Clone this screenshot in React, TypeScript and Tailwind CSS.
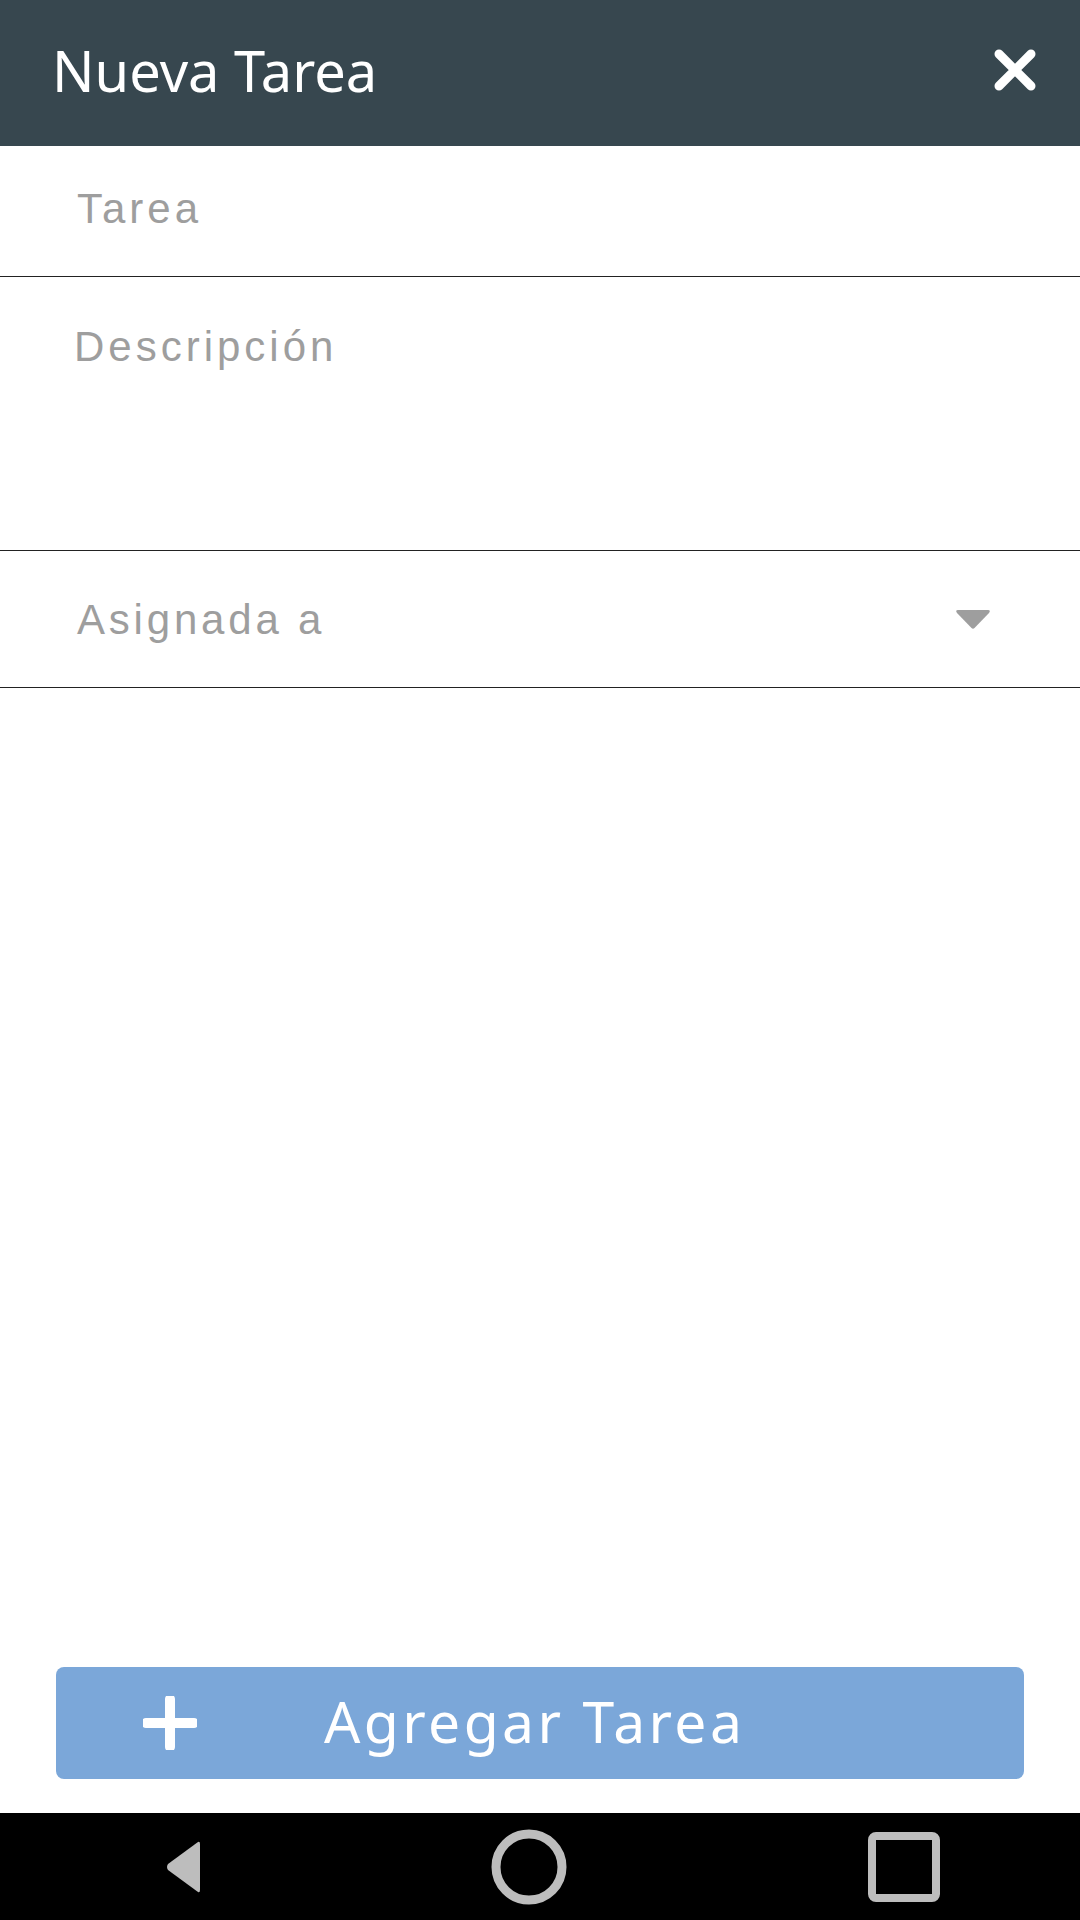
import { useState } from 'react';

export default function App() {
  const [tarea, setTarea] = useState('');
  const [descripcion, setDescripcion] = useState('');

  return (
    <div className="h-[1920px] w-[1080px] flex flex-col bg-white" style={{ fontFamily: '"Open Sans", sans-serif' }}>
      <header className="h-[146px] shrink-0 bg-[#37474f] flex items-center justify-between pl-[52px] pr-[43px]">
        <h1 className="text-white text-[56px] leading-none -mt-[6px]" style={{ fontFamily: '"Noto Sans", sans-serif' }}>
          Nueva Tarea
        </h1>
        <button aria-label="Cerrar" className="w-[44px] h-[44px] flex items-center justify-center -mt-[6px]">
          <svg width="44" height="44" viewBox="0 0 44 44">
            <path d="M6 6 L38 38 M38 6 L6 38" stroke="white" strokeWidth="9" strokeLinecap="round" />
          </svg>
        </button>
      </header>

      <div className="h-[131px] shrink-0 border-b border-[#222] flex items-center px-[77px]">
        <input
          value={tarea}
          onChange={(e) => setTarea(e.target.value)}
          placeholder="Tarea"
          className="w-full bg-transparent outline-none text-[42px] tracking-[4px] text-[#616161] placeholder:text-[#9e9e9e] -mt-[6px]"
          style={{ fontFamily: '"Liberation Sans", sans-serif' }}
        />
      </div>

      <div className="h-[274px] shrink-0 border-b border-[#222] px-[74px] pt-[45px]">
        <textarea
          value={descripcion}
          onChange={(e) => setDescripcion(e.target.value)}
          placeholder="Descripción"
          className="w-full h-[180px] resize-none bg-transparent outline-none text-[42px] leading-[1.2] tracking-[4px] text-[#616161] placeholder:text-[#9e9e9e]"
          style={{ fontFamily: '"Liberation Sans", sans-serif' }}
        />
      </div>

      <div className="h-[137px] shrink-0 border-b border-[#222] flex items-center justify-between pl-[77px] pr-[89px]">
        <span className="text-[42px] tracking-[3.8px] text-[#9e9e9e]" style={{ fontFamily: '"Liberation Sans", sans-serif' }}>
          Asignada a
        </span>
        <svg width="36" height="22" viewBox="0 0 36 22" className="mt-[2px]">
          <path d="M3 1 H33 Q36 1 34 4 L19.5 19 Q18 20.5 16.5 19 L2 4 Q0 1 3 1 Z" fill="#9e9e9e" />
        </svg>
      </div>

      <div className="flex-1" />

      <div className="px-[56px] pb-[34px] shrink-0">
        <button className="w-full h-[112px] rounded-[8px] bg-[#7ba7d9] flex items-center relative">
          <svg width="54" height="54" viewBox="0 0 54 54" className="absolute left-[87px] top-[29px]">
            <path d="M27 3 V51 M3 27 H51" stroke="white" strokeWidth="10" strokeLinecap="round" />
          </svg>
          <span className="ml-[268px] text-white text-[57px] tracking-[3.4px] leading-none -mt-[4px]" style={{ fontFamily: '"Noto Sans", sans-serif' }}>
            Agregar Tarea
          </span>
        </button>
      </div>

      <nav className="h-[107px] shrink-0 bg-black flex items-center pl-[165px]">
        <svg width="36" height="56" viewBox="0 0 36 56">
          <path d="M33 3 Q35 2 35 5 V51 Q35 54 33 53 L3 31 Q1 28 3 25 Z" fill="#bdbdbd" />
        </svg>
        <svg width="78" height="78" viewBox="0 0 78 78" className="ml-[289px]">
          <circle cx="39" cy="39" r="33" stroke="#bdbdbd" strokeWidth="9" fill="none" />
        </svg>
        <svg width="72" height="70" viewBox="0 0 72 70" className="ml-[300px]">
          <rect x="4" y="4" width="64" height="62" rx="4" stroke="#bdbdbd" strokeWidth="8" fill="none" />
        </svg>
      </nav>
    </div>
  );
}
